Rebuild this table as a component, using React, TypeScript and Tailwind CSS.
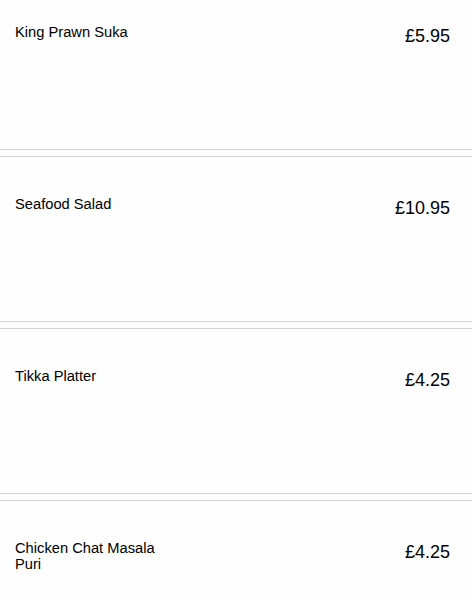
import React from "react";

const items = [
  { name: "King Prawn Suka", price: "£5.95" },
  { name: "Seafood Salad", price: "£10.95" },
  { name: "Tikka Platter", price: "£4.25" },
  { name: "Chicken Chat Masala Puri", price: "£4.25" },
];

export default function App() {
  return (
    <div className="h-[600px] overflow-hidden bg-[#fdfdfd]" style={{ fontFamily: '"Liberation Sans", Arial, sans-serif' }}>
      <div className="-mt-[16px] flex flex-col gap-[6px]">
        {items.map((it) => (
          <div key={it.name} className="h-[166px] border-y border-[#d3d3d3] bg-[#fdfdfd] flex items-start justify-between pl-[15px] pr-[22px] pt-[37px]">
            <div className="w-[160px] text-[14.7px] leading-[16px] text-black pt-[2px]">{it.name}</div>
            <div className="text-[18px] leading-[21px] text-black pt-[4px]">{it.price}</div>
          </div>
        ))}
      </div>
    </div>
  );
}
